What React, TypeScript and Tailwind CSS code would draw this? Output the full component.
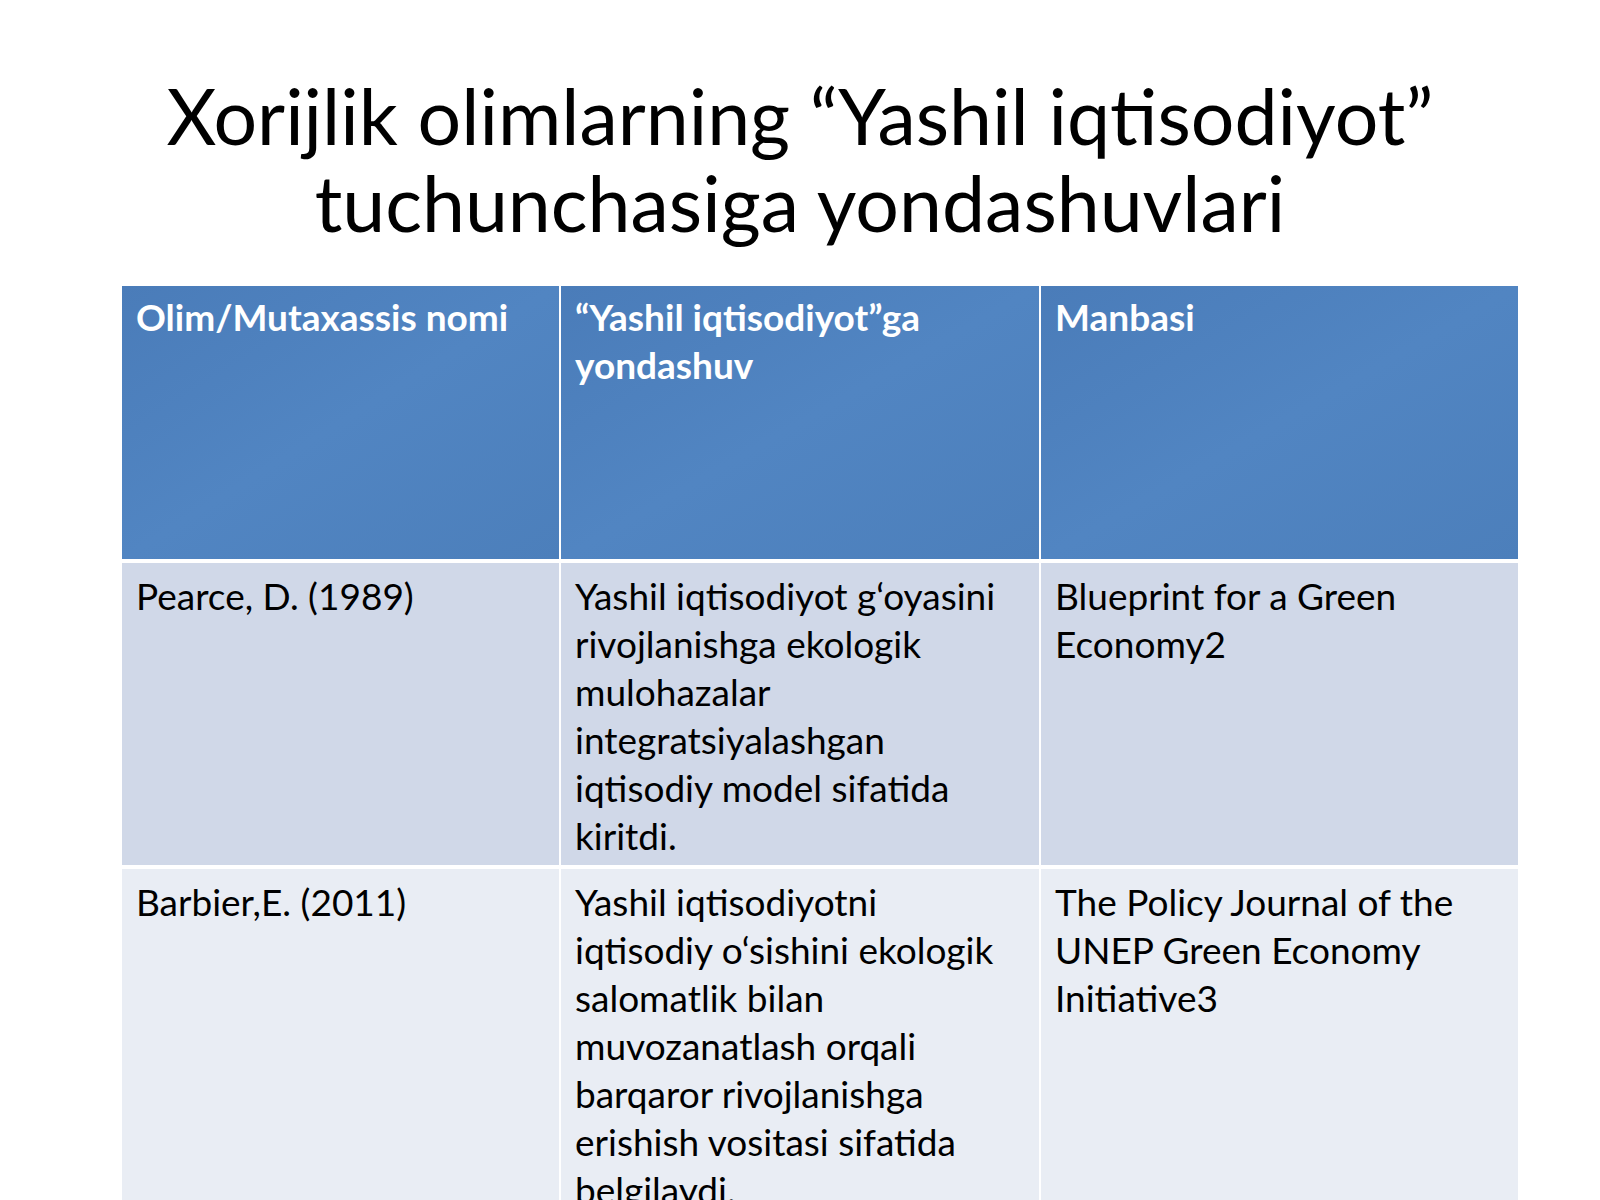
import React from 'react';

type Row = {
  name: string[];
  approach: string[];
  source: string[];
  bg: string;
  h: string;
};

const rows: Row[] = [
  {
    name: ['Pearce, D. (1989)'],
    approach: [
      'Yashil iqtisodiyot g‘oyasini',
      'rivojlanishga ekologik',
      'mulohazalar',
      'integratsiyalashgan',
      'iqtisodiy model sifatida',
      'kiritdi.',
    ],
    source: ['Blueprint for a Green', 'Economy2'],
    bg: 'bg-[#d0d8e8]',
    h: 'h-[302px]',
  },
  {
    name: ['Barbier,E. (2011)'],
    approach: [
      'Yashil iqtisodiyotni',
      'iqtisodiy o‘sishini ekologik',
      'salomatlik bilan',
      'muvozanatlash orqali',
      'barqaror rivojlanishga',
      'erishish vositasi sifatida',
      'belgilaydi.',
    ],
    source: ['The Policy Journal of the', 'UNEP Green Economy', 'Initiative3'],
    bg: 'bg-[#e9edf4]',
    h: 'h-[420px]',
  },
];

function Lines({ lines }: { lines: string[] }) {
  return (
    <>
      {lines.map((l, i) => (
        <span key={i} className="block whitespace-nowrap">
          {l}
        </span>
      ))}
    </>
  );
}

export default function App() {
  return (
    <div className="w-[1600px] h-[1200px] overflow-hidden bg-white font-['Lato',sans-serif] text-black">
      <h1 className="pt-[72px] text-center text-[77px] leading-[87px] font-normal">
        Xorijlik olimlarning “Yashil iqtisodiyot”
        <br />
        tuchunchasiga yondashuvlari
      </h1>

      <div className="ml-[122px] mt-[40px] w-[1396px] flex flex-col gap-[4px]">
        <div className="flex gap-[2px] h-[273px] text-white font-bold text-[37px] leading-[48px]">
          <div className="w-[437px] bg-gradient-to-br from-[#4a7cb9] via-[#5185c2] to-[#4c7fbb] px-[14px] pt-[7px]">
            Olim/Mutaxassis nomi
          </div>
          <div className="w-[478px] bg-gradient-to-br from-[#4a7cb9] via-[#5185c2] to-[#4c7fbb] px-[14px] pt-[7px]">
            <Lines lines={['“Yashil iqtisodiyot”ga', 'yondashuv']} />
          </div>
          <div className="flex-1 bg-gradient-to-br from-[#4a7cb9] via-[#5185c2] to-[#4c7fbb] px-[14px] pt-[7px]">
            Manbasi
          </div>
        </div>

        {rows.map((r) => (
          <div key={r.name[0]} className={`flex gap-[2px] ${r.h} text-[37px] leading-[48px]`}>
            <div className={`w-[437px] ${r.bg} px-[14px] pt-[9px]`}>
              <Lines lines={r.name} />
            </div>
            <div className={`w-[478px] ${r.bg} px-[14px] pt-[9px]`}>
              <Lines lines={r.approach} />
            </div>
            <div className={`flex-1 ${r.bg} px-[14px] pt-[9px]`}>
              <Lines lines={r.source} />
            </div>
          </div>
        ))}
      </div>
    </div>
  );
}
